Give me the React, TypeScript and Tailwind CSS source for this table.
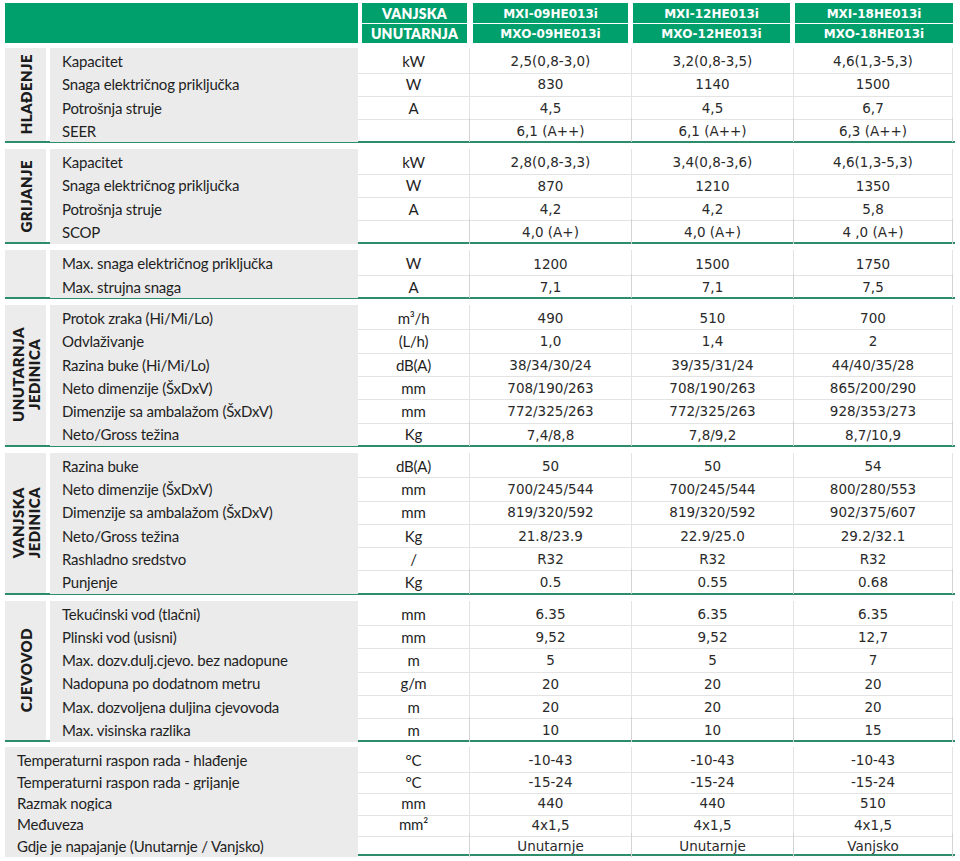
type Row = [string, string, string, string, string];

type Section = {
  title?: string[];
  rows: Row[];
};

const sections: Section[] = [
  {
    title: ["HLAĐENJE"],
    rows: [
      ["Kapacitet", "kW", "2,5(0,8-3,0)", "3,2(0,8-3,5)", "4,6(1,3-5,3)"],
      ["Snaga električnog priključka", "W", "830", "1140", "1500"],
      ["Potrošnja struje", "A", "4,5", "4,5", "6,7"],
      ["SEER", "", "6,1 (A++)", "6,1 (A++)", "6,3 (A++)"],
    ],
  },
  {
    title: ["GRIJANJE"],
    rows: [
      ["Kapacitet", "kW", "2,8(0,8-3,3)", "3,4(0,8-3,6)", "4,6(1,3-5,3)"],
      ["Snaga električnog priključka", "W", "870", "1210", "1350"],
      ["Potrošnja struje", "A", "4,2", "4,2", "5,8"],
      ["SCOP", "", "4,0 (A+)", "4,0 (A+)", "4 ,0 (A+)"],
    ],
  },
  {
    title: [],
    rows: [
      ["Max. snaga električnog priključka", "W", "1200", "1500", "1750"],
      ["Max. strujna snaga", "A", "7,1", "7,1", "7,5"],
    ],
  },
  {
    title: ["UNUTARNJA", "JEDINICA"],
    rows: [
      ["Protok zraka (Hi/Mi/Lo)", "m³/h", "490", "510", "700"],
      ["Odvlaživanje", "(L/h)", "1,0", "1,4", "2"],
      ["Razina buke (Hi/Mi/Lo)", "dB(A)", "38/34/30/24", "39/35/31/24", "44/40/35/28"],
      ["Neto dimenzije (ŠxDxV)", "mm", "708/190/263", "708/190/263", "865/200/290"],
      ["Dimenzije sa ambalažom (ŠxDxV)", "mm", "772/325/263", "772/325/263", "928/353/273"],
      ["Neto/Gross  težina", "Kg", "7,4/8,8", "7,8/9,2", "8,7/10,9"],
    ],
  },
  {
    title: ["VANJSKA", "JEDINICA"],
    rows: [
      ["Razina buke", "dB(A)", "50", "50", "54"],
      ["Neto dimenzije (ŠxDxV)", "mm", "700/245/544", "700/245/544", "800/280/553"],
      ["Dimenzije sa ambalažom (ŠxDxV)", "mm", "819/320/592", "819/320/592", "902/375/607"],
      ["Neto/Gross  težina", "Kg", "21.8/23.9", "22.9/25.0", "29.2/32.1"],
      ["Rashladno sredstvo", "/", "R32", "R32", "R32"],
      ["Punjenje", "Kg", "0.5", "0.55", "0.68"],
    ],
  },
  {
    title: ["CJEVOVOD"],
    rows: [
      ["Tekućinski vod (tlačni)", "mm", "6.35", "6.35", "6.35"],
      ["Plinski vod (usisni)", "mm", "9,52", "9,52", "12,7"],
      ["Max. dozv.dulj.cjevo. bez nadopune", "m", "5", "5", "7"],
      ["Nadopuna po dodatnom metru", "g/m", "20", "20", "20"],
      ["Max. dozvoljena duljina cjevovoda", "m", "20", "20", "20"],
      ["Max. visinska razlika", "m", "10", "10", "15"],
    ],
  },
];

const general: Row[] = [
  ["Temperaturni raspon rada - hlađenje", "°C", "-10-43", "-10-43", "-10-43"],
  ["Temperaturni raspon rada - grijanje", "°C", "-15-24", "-15-24", "-15-24"],
  ["Razmak nogica", "mm", "440", "440", "510"],
  ["Međuveza", "mm²", "4x1,5", "4x1,5", "4x1,5"],
  ["Gdje je napajanje (Unutarnje / Vanjsko)", "", "Unutarnje", "Unutarnje", "Vanjsko"],
];

const label = "font-['Lato',sans-serif] text-[15px] text-[#1f1f1f] tracking-[-0.2px]";
const value = "font-['DejaVu_Sans',sans-serif] text-[13.5px] text-[#2a2a2a]";

function DataRow({ row, last, wide, h }: { row: Row; last: boolean; wide?: boolean; h: string }) {
  const line = last ? "" : "border-b border-[#e3e3e3]";
  return (
    <div className={`grid ${wide ? "grid-cols-[353px_111px_162px_162px_160px]" : "grid-cols-[308px_111px_162px_162px_160px]"} ${h}`}>
      <div
        className={`flex items-center bg-[#ebebeb] pt-[2px] pl-3 ${label} ${
          last ? "" : "border-b border-dotted border-[#c4c4c4]"
        }`}
      >
        {row[0]}
      </div>
      <div className={`flex items-center justify-center pt-[2px] ${label} ${line}`}>{row[1]}</div>
      {row.slice(2).map((v, i) => (
        <div
          key={i}
          className={`flex items-center justify-center border-l border-[#d3d3d3] pt-[2px] ${i === 2 ? "border-r" : ""} ${value} ${line}`}
        >
          {v}
        </div>
      ))}
    </div>
  );
}

function SideTitle({ lines }: { lines: string[] }) {
  return (
    <div className="mr-[4px] flex w-[41px] items-center justify-center bg-[#ececec]">
      {lines.length > 0 && (
        <div className="rotate-180 text-center font-['Lato',sans-serif] text-[15px] leading-[16px] font-extrabold tracking-[0.4px] text-[#1c1c1c] [writing-mode:vertical-rl]">
          {lines.map((l) => (
            <div key={l}>{l}</div>
          ))}
        </div>
      )}
    </div>
  );
}

function HeaderCol({ top, bottom, w, brand }: { top: string; bottom: string; w: string; brand?: boolean }) {
  const font = brand
    ? "font-['Lato',sans-serif] text-[14px] font-extrabold tracking-[0.2px]"
    : "font-['DejaVu_Sans',sans-serif] text-[12px] font-bold";
  return (
    <div className={`flex flex-col gap-px ${w}`}>
      <div className={`flex h-[20px] items-center justify-center bg-[#00a06d] pt-px text-white ${font}`}>{top}</div>
      <div className={`flex h-[19px] items-center justify-center bg-[#00a06d] text-white ${font}`}>{bottom}</div>
    </div>
  );
}

export default function App() {
  return (
    <div className="h-[861px] w-[960px] overflow-hidden bg-white pt-[3px] pl-[5px]">
      {/* zaglavlje */}
      <div className="flex h-[40px] w-[950px]">
        <div className="w-[353px] bg-[#00a06d]" />
        <div className="w-[4px]" />
        <HeaderCol brand top="VANJSKA" bottom="UNUTARNJA" w="w-[105px]" />
        <div className="w-[6px]" />
        <HeaderCol top="MXI-09HE013i" bottom="MXO-09HE013i" w="w-[155px]" />
        <div className="w-[5px]" />
        <HeaderCol top="MXI-12HE013i" bottom="MXO-12HE013i" w="w-[157px]" />
        <div className="w-[5px]" />
        <HeaderCol top="MXI-18HE013i" bottom="MXO-18HE013i" w="w-[158px]" />
      </div>

      <div className="mt-[5px] flex w-[950px] flex-col gap-[6px]">
        {sections.map((s, si) => (
          <div key={si} className="flex border-b-2 border-[#2d8c6a]">
            <SideTitle lines={s.title ?? []} />
            <div className="flex flex-col">
              {s.rows.map((r, ri) => (
                <DataRow key={ri} row={r} last={ri === s.rows.length - 1} h="h-[23.3px]" />
              ))}
            </div>
          </div>
        ))}

        {/* opći podaci */}
        <div className="-mt-px flex flex-col border-b-2 border-[#2d8c6a]">
          {general.map((r, ri) => (
            <DataRow key={ri} row={r} wide last={ri === general.length - 1} h="h-[21.4px]" />
          ))}
        </div>
      </div>
    </div>
  );
}
